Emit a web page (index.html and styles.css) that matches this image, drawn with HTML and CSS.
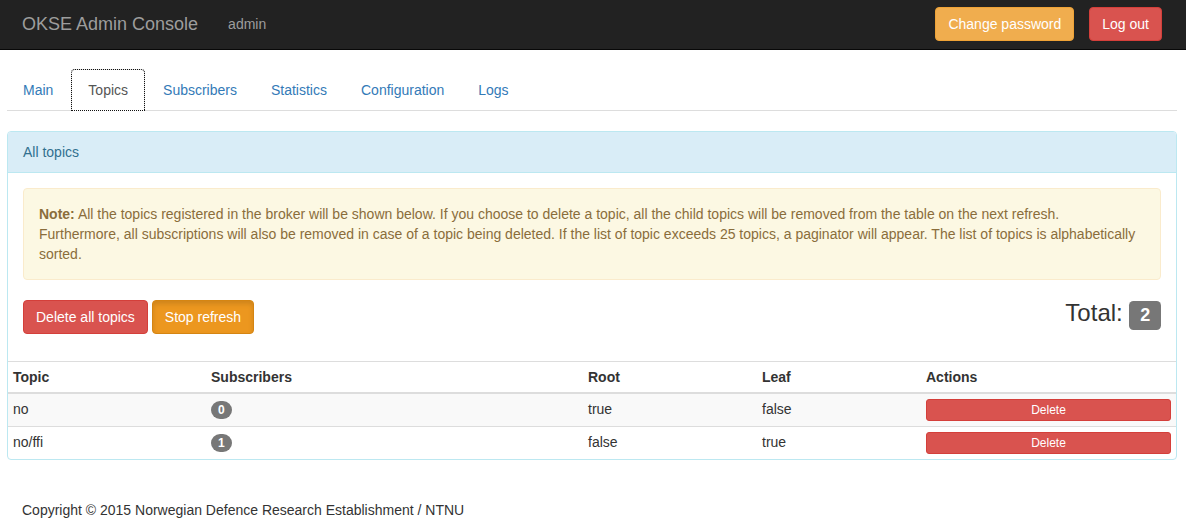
FILE: index.html
```html
<!DOCTYPE html>
<html>
<head>
<meta charset="utf-8">
<title>OKSE Admin Console</title>
<link rel="stylesheet" href="styles.css">
</head>
<body>
<nav class="navbar">
  <div class="navbar-left">
    <span class="brand">OKSE Admin Console</span>
    <span class="navbar-text">admin</span>
  </div>
  <div class="navbar-right">
    <button class="btn btn-warning">Change password</button>
    <button class="btn btn-danger">Log out</button>
  </div>
</nav>

<div class="page">
  <ul class="tabs">
    <li><a class="tab">Main</a></li>
    <li><a class="tab active">Topics</a></li>
    <li><a class="tab">Subscribers</a></li>
    <li><a class="tab">Statistics</a></li>
    <li><a class="tab">Configuration</a></li>
    <li><a class="tab">Logs</a></li>
  </ul>

  <div class="panel">
    <div class="panel-heading">All topics</div>
    <div class="panel-body">
      <div class="alert">
        <strong>Note:</strong> All the topics registered in the broker will be shown below. If you choose to delete a topic, all the child topics will be removed from the table on the next refresh. Furthermore, all subscriptions will also be removed in case of a topic being deleted. If the list of topic exceeds 25 topics, a paginator will appear. The list of topics is alphabetically sorted.
      </div>
      <div class="actions">
        <div class="action-buttons">
          <button class="btn btn-danger">Delete all topics</button>
          <button class="btn btn-warning btn-active">Stop refresh</button>
        </div>
        <h3 class="total">Total: <span class="label">2</span></h3>
      </div>
    </div>
    <table class="table">
      <colgroup>
        <col class="c-topic"><col class="c-subs"><col class="c-root"><col class="c-leaf"><col class="c-actions">
      </colgroup>
      <thead>
        <tr><th>Topic</th><th>Subscribers</th><th>Root</th><th>Leaf</th><th>Actions</th></tr>
      </thead>
      <tbody>
        <tr class="odd"><td>no</td><td><span class="badge">0</span></td><td>true</td><td>false</td><td><button class="btn btn-danger btn-xs">Delete</button></td></tr>
        <tr><td>no/ffi</td><td><span class="badge">1</span></td><td>false</td><td>true</td><td><button class="btn btn-danger btn-xs">Delete</button></td></tr>
      </tbody>
    </table>
  </div>

  <footer class="footer">Copyright © 2015 Norwegian Defence Research Establishment / NTNU</footer>
</div>
</body>
</html>
```

FILE: styles.css
```css
* { box-sizing: border-box; }
html, body { margin: 0; padding: 0; }
body {
  font-family: "Liberation Sans", Arial, Helvetica, sans-serif;
  font-size: 14px;
  line-height: 20px;
  color: #333;
  background: #fff;
}

.navbar {
  height: 50px;
  background: #222;
  border-bottom: 1px solid #080808;
  display: flex;
  justify-content: space-between;
  align-items: center;
  padding: 0 24px 0 7px;
}
.navbar-left { display: flex; align-items: center; }
.brand {
  font-size: 18px;
  line-height: 20px;
  color: #9d9d9d;
  padding: 14px 15px 16px;
}
.navbar-text { color: #9d9d9d; margin-left: 15px; padding-bottom: 2px; }
.navbar-right { display: flex; gap: 15px; padding-bottom: 1px; }

.btn {
  font-family: inherit;
  font-size: 14px;
  line-height: 20px;
  padding: 6px 12px;
  border: 1px solid transparent;
  border-radius: 4px;
  color: #fff;
  cursor: pointer;
  margin: 0;
}
.btn-warning { background: #f0ad4e; border-color: #eea236; }
.btn-danger { background: #d9534f; border-color: #d43f3a; }
.btn-active {
  background: #ec971f;
  border-color: #d58512;
  box-shadow: inset 0 3px 5px rgba(0,0,0,.125);
}
.btn-xs {
  display: block;
  width: 100%;
  font-size: 12px;
  line-height: 18px;
  padding: 1px 5px;
  border-radius: 3px;
}

.page { margin: 0 9px 0 7px; }

.tabs {
  list-style: none;
  margin: 19px 0 0;
  padding: 0;
  display: flex;
  border-bottom: 1px solid #ddd;
}
.tabs li { margin-bottom: -1px; }
.tab {
  display: block;
  padding: 10px 15px;
  margin-right: 2px;
  border: 1px solid transparent;
  border-radius: 4px 4px 0 0;
  color: #337ab7;
  text-decoration: none;
}
.tab.active {
  color: #555;
  background: #fff;
  border-color: #ddd #ddd transparent;
  outline: 1px dotted #111;
  outline-offset: -1px;
  padding: 10px 16px;
}

.panel {
  margin-top: 20px;
  border: 1px solid #bce8f1;
  border-radius: 4px;
  overflow: hidden;
}
.panel-heading {
  background: #d9edf7;
  color: #31708f;
  padding: 10px 15px;
  border-bottom: 1px solid #bce8f1;
}
.panel-body { padding: 15px; }

.alert {
  background: #fcf8e3;
  border: 1px solid #faebcc;
  color: #8a6d3b;
  border-radius: 4px;
  padding: 15px 21px 15px 15px;
  margin-bottom: 20px;
}
.alert strong { font-weight: bold; }

.actions {
  display: flex;
  justify-content: space-between;
  align-items: flex-start;
  height: 34px;
  margin-bottom: 12px;
}
.action-buttons { display: flex; gap: 4px; }
.total {
  margin: 0;
  font-size: 24px;
  font-weight: normal;
  line-height: 1.1;
}
.label {
  display: inline;
  background: #777;
  color: #fff;
  font-size: 75%;
  font-weight: bold;
  line-height: 1;
  padding: .2em .6em .3em;
  border-radius: .25em;
  vertical-align: baseline;
}

.table {
  width: 100%;
  border-collapse: collapse;
  border-spacing: 0;
  table-layout: fixed;
  border-top: 1px solid #ddd;
}
.c-topic { width: 198px; }
.c-subs { width: 377px; }
.c-root { width: 174px; }
.c-leaf { width: 164px; }
.table th, .table td {
  padding: 5px;
  text-align: left;
  vertical-align: top;
  line-height: 20px;
}
.table th {
  font-weight: bold;
  border-bottom: 2px solid #ddd;
}
.table td { border-top: 1px solid #ddd; }
.table tr.odd td { background: #f9f9f9; }

.badge {
  display: inline-block;
  min-width: 10px;
  padding: 3px 7px;
  font-size: 12px;
  font-weight: bold;
  line-height: 1;
  color: #fff;
  background: #777;
  border-radius: 10px;
  vertical-align: middle;
  text-align: center;
}

.footer {
  padding: 40px 15px 20px;
}
```
